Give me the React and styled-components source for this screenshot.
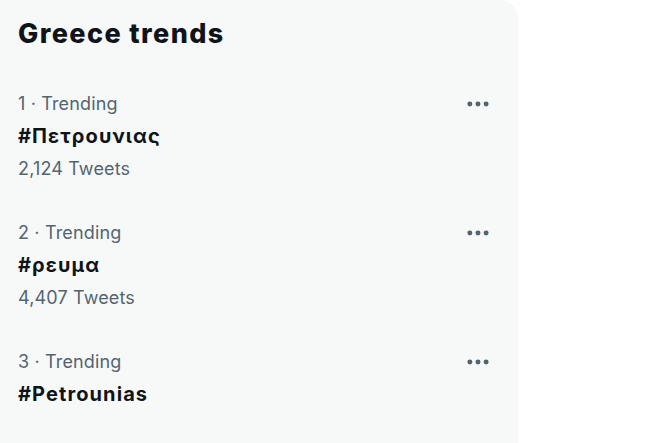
import React from 'react';
import styled, { createGlobalStyle } from 'styled-components';

const GlobalStyle = createGlobalStyle`
body {
  margin: 0;
  background: #ffffff;
  font-family: Inter, "Noto Sans", "Liberation Sans", sans-serif;
}
`

const trends = [
    { rank: 1, name: '#Πετρουνιας', tweets: '2,124 Tweets' },
    { rank: 2, name: '#ρευμα', tweets: '4,407 Tweets' },
    { rank: 3, name: '#Petrounias' },
];

const MoreIcon = () => (
    <svg width="24" height="24" viewBox="0 0 24 24" fill="#536471">
        <circle cx="4.5" cy="12" r="2.3" />
        <circle cx="12" cy="12" r="2.3" />
        <circle cx="19.5" cy="12" r="2.3" />
    </svg>
);

const App = () => {
    return (
        <>
            <GlobalStyle />
            <Page>
                <Panel>
                    <Header>Greece trends</Header>
                    {trends.map(trend => (
                        <Trend key={trend.rank}>
                            <TrendBody>
                                <Meta>{trend.rank} · Trending</Meta>
                                <Name>{trend.name}</Name>
                                {trend.tweets && <Meta>{trend.tweets}</Meta>}
                            </TrendBody>
                            <More aria-label="More">
                                <MoreIcon />
                            </More>
                        </Trend>
                    ))}
                </Panel>
            </Page>
        </>
    );
}

const Page = styled.div`
width: 651px;
height: 443px;
overflow: hidden;
`
const Panel = styled.section`
width: 518px;
min-height: 470px;
background: #f7f9f9;
border-top-right-radius: 18px;
`
const Header = styled.h2`
margin: 0;
padding: 12px 18px 15px;
font-size: 27px;
line-height: 44px;
font-weight: 800;
letter-spacing: 1.4px;
color: #0f1419;
`
const Trend = styled.div`
display: flex;
justify-content: space-between;
align-items: flex-start;
padding: 17px 18px 15px;
`
const TrendBody = styled.div`
display: flex;
flex-direction: column;
`
const Meta = styled.span`
font-size: 18px;
line-height: 32px;
letter-spacing: 0.15px;
color: #536471;
`
const Name = styled.span`
font-size: 20px;
line-height: 33px;
font-weight: 700;
letter-spacing: 1.1px;
color: #0f1419;
`
const More = styled.button`
display: flex;
align-items: center;
justify-content: center;
width: 32px;
height: 32px;
margin-right: 6px;
padding: 0;
border: none;
background: transparent;
svg { width: 26px; height: 26px; }
`

export default App;
